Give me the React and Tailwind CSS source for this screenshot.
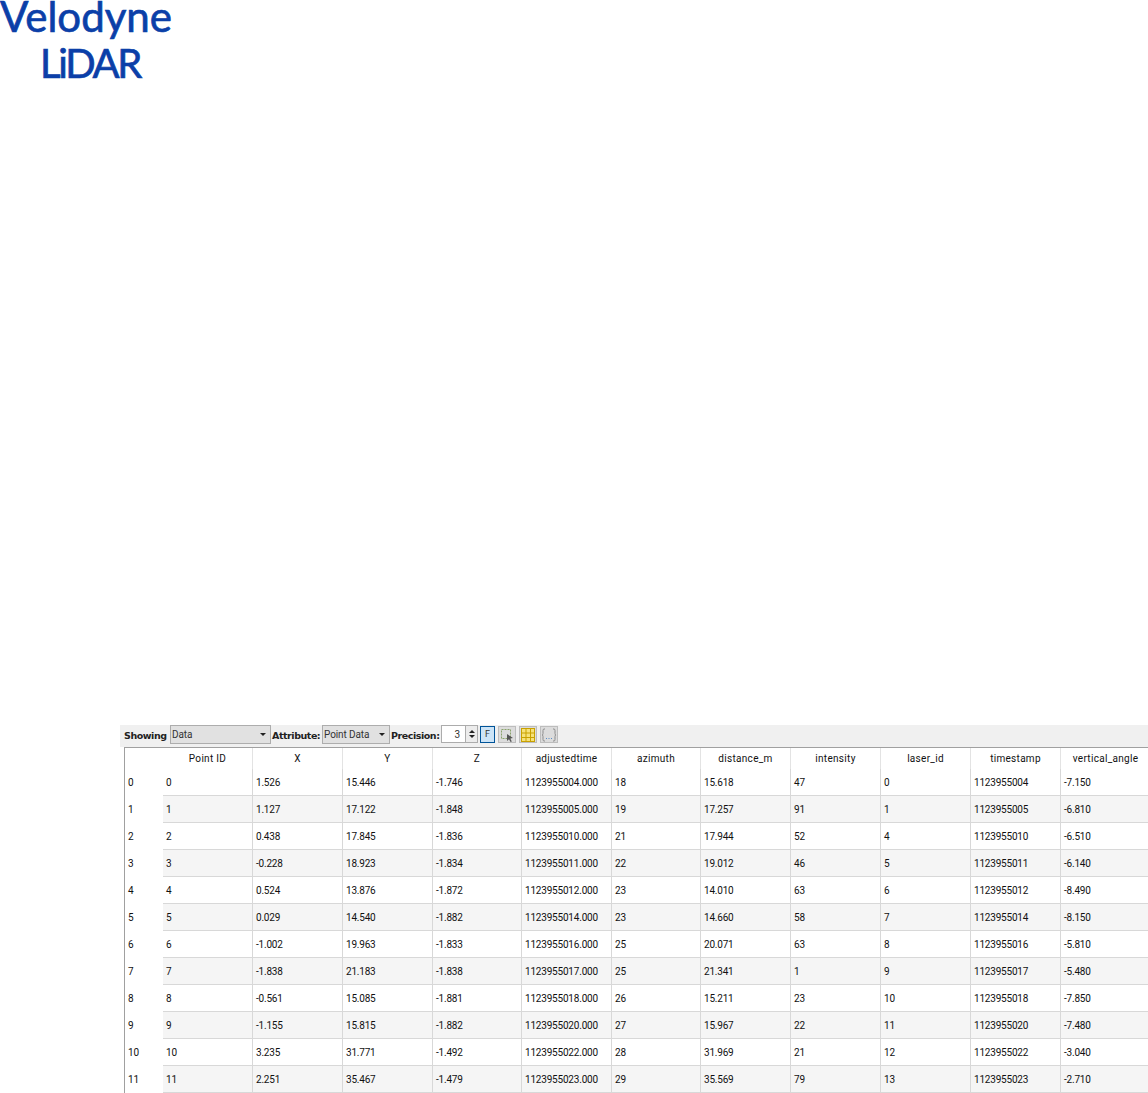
const columns = [
  { name: "Point ID", w: "w-[90px]" },
  { name: "X", w: "w-[90px]" },
  { name: "Y", w: "w-[90px]" },
  { name: "Z", w: "w-[89px]" },
  { name: "adjustedtime", w: "w-[90px]" },
  { name: "azimuth", w: "w-[89px]" },
  { name: "distance_m", w: "w-[90px]" },
  { name: "intensity", w: "w-[90px]" },
  { name: "laser_id", w: "w-[90px]" },
  { name: "timestamp", w: "w-[90px]" },
  { name: "vertical_angle", w: "w-[90px]" },
];

const rows = [
  ["0", "1.526", "15.446", "-1.746", "1123955004.000", "18", "15.618", "47", "0", "1123955004", "-7.150"],
  ["1", "1.127", "17.122", "-1.848", "1123955005.000", "19", "17.257", "91", "1", "1123955005", "-6.810"],
  ["2", "0.438", "17.845", "-1.836", "1123955010.000", "21", "17.944", "52", "4", "1123955010", "-6.510"],
  ["3", "-0.228", "18.923", "-1.834", "1123955011.000", "22", "19.012", "46", "5", "1123955011", "-6.140"],
  ["4", "0.524", "13.876", "-1.872", "1123955012.000", "23", "14.010", "63", "6", "1123955012", "-8.490"],
  ["5", "0.029", "14.540", "-1.882", "1123955014.000", "23", "14.660", "58", "7", "1123955014", "-8.150"],
  ["6", "-1.002", "19.963", "-1.833", "1123955016.000", "25", "20.071", "63", "8", "1123955016", "-5.810"],
  ["7", "-1.838", "21.183", "-1.838", "1123955017.000", "25", "21.341", "1", "9", "1123955017", "-5.480"],
  ["8", "-0.561", "15.085", "-1.881", "1123955018.000", "26", "15.211", "23", "10", "1123955018", "-7.850"],
  ["9", "-1.155", "15.815", "-1.882", "1123955020.000", "27", "15.967", "22", "11", "1123955020", "-7.480"],
  ["10", "3.235", "31.771", "-1.492", "1123955022.000", "28", "31.969", "21", "12", "1123955022", "-3.040"],
  ["11", "2.251", "35.467", "-1.479", "1123955023.000", "29", "35.569", "79", "13", "1123955023", "-2.710"],
];

const Caret = () => <span className="w-0 h-0 border-x-[3.5px] border-x-transparent border-t-[3.5px] border-t-[#222]" />;

const Select = ({ label, className }) => (
  <div className={`h-[19px] flex items-center justify-between pl-[1px] pr-[4px] bg-[#e1e1e1] border border-[#adadad] ${className}`}>
    <span className="tracking-[-0.1px] text-[#333]">{label}</span>
    <Caret />
  </div>
);

const Label = ({ children, className }) => (
  <span className={`font-['DejaVu_Sans'] font-bold text-[9.5px] tracking-[-0.45px] text-[#222] ${className}`}>{children}</span>
);

const Toolbar = () => (
  <div className="h-[22px] bg-[#f0f0f0] flex items-start pl-[4px] text-[#333]">
    <Label className="w-[46px] mt-[4px]">Showing</Label>
    <Select label="Data" className="w-[101px]" />
    <Label className="w-[50px] ml-[1px] mt-[4px]">Attribute:</Label>
    <Select label="Point Data" className="w-[68px]" />
    <Label className="w-[50px] ml-[1px] mt-[4px]">Precision:</Label>
    <div className="w-[37px] h-[18px] flex bg-white border border-[#acacac]">
      <span className="flex-1 text-right pr-[5px] leading-[17px]">3</span>
      <div className="w-[12px] border-l border-[#acacac] bg-[#ececec] flex flex-col items-center justify-center gap-[2px]">
        <span className="w-0 h-0 border-x-[3px] border-x-transparent border-b-[3px] border-b-[#222]" />
        <span className="w-0 h-0 border-x-[3px] border-x-transparent border-t-[3px] border-t-[#222]" />
      </div>
    </div>
    <div className="w-[15px] h-[17px] ml-[2px] mt-[1px] flex items-center justify-center bg-[#cce4f7] border border-[#005499] text-[9px] text-[#333]">F</div>
    <div className="w-[18px] h-[17px] ml-[3px] mt-[1px] flex items-center justify-center bg-[#dcdcdc] border border-[#bdbdbd]">
      <svg width="14" height="14" viewBox="0 0 14 14">
        <rect x="1.5" y="1.5" width="9" height="9" fill="none" stroke="#8aa36a" strokeDasharray="2 1" />
        <path d="M7 6 L13 10 L10.3 10.6 L11.8 13.5 L10.6 14 L9 11.2 L7 13 Z" fill="#555" />
      </svg>
    </div>
    <div className="w-[18px] h-[17px] ml-[3px] mt-[1px] flex items-center justify-center bg-[#dcdcdc] border border-[#bdbdbd]">
      <svg width="14" height="14" viewBox="0 0 14 14">
        <rect x="0.5" y="0.5" width="13" height="13" fill="#f6e27a" stroke="#c9a100" />
        <path d="M0.5 5 H13.5 M0.5 9.5 H13.5 M5 0.5 V13.5 M9.5 0.5 V13.5" stroke="#c9a100" fill="none" />
      </svg>
    </div>
    <div className="w-[18px] h-[17px] ml-[3px] mt-[1px] flex items-center justify-center bg-[#dcdcdc] border border-[#bdbdbd]">
      <svg width="16" height="14" viewBox="0 0 16 14" fill="none">
        <path d="M4 1 H3 Q2 1 2 2.5 V5.5 Q2 7 1 7 Q2 7 2 8.5 V11.5 Q2 13 3 13 H4 M12 1 H13 Q14 1 14 2.5 V5.5 Q14 7 15 7 Q14 7 14 8.5 V11.5 Q14 13 13 13 H12" stroke="#8c8c8c" />
        <path d="M5 10.5 H6 M7.5 10.5 H8.5 M10 10.5 H11" stroke="#5b8fc7" />
      </svg>
    </div>
  </div>
);

const DataTable = () => (
  <div className="ml-[4px] border-l border-t border-[#a0a0a0] w-[1030px]">
    <div className="flex h-[21px]">
      <div className="w-[38px] shrink-0" />
      {columns.map((col) => (
        <div key={col.name} className={`${col.w} shrink-0 text-center leading-[22px] tracking-[0.3px] border-r border-[#e3e3e3]`}>
          {col.name}
        </div>
      ))}
    </div>
    {rows.map((row, i) => (
      <div key={row[0]} className="flex h-[27px]">
        <div className="w-[38px] shrink-0 pl-[3px] leading-[28px] tracking-[-0.2px]">{i}</div>
        {row.map((value, j) => (
          <div
            key={j}
            className={`${columns[j].w} shrink-0 pl-[3px] leading-[28px] tracking-[-0.2px] border-r border-b border-[#d8d8d8] ${i % 2 === 1 ? "bg-[#f5f5f5]" : "bg-white"}`}
          >
            {value}
          </div>
        ))}
      </div>
    ))}
  </div>
);

const Logo = () => (
  <div className="h-[725px] text-[#0b3fa8] font-['Lato'] [-webkit-text-stroke:0.7px_#0b3fa8]">
    <div className="h-[49px] text-[42px] leading-[32px]">Velodyne</div>
    <div className="pl-[40px] text-[40px] leading-[29px] tracking-[-2.3px]">LiDAR</div>
  </div>
);

export default function App() {
  return (
    <div className="w-[1148px] h-[1093px] overflow-hidden bg-white font-['Roboto'] text-[10px] text-[#111]">
      <Logo />
      <div className="ml-[120px]">
        <Toolbar />
        <DataTable />
      </div>
    </div>
  );
}
